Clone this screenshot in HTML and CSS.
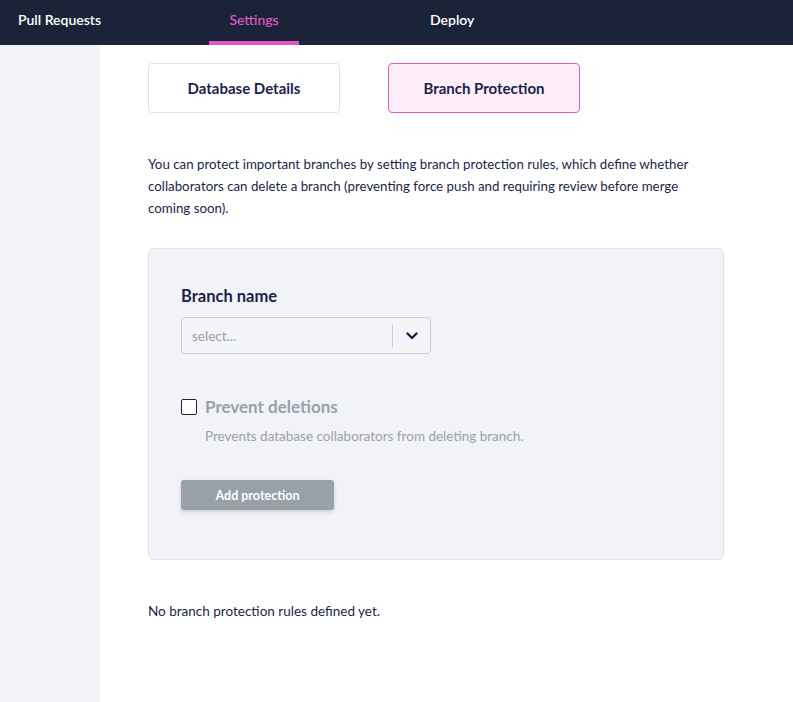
FILE: index.html
```html
<!DOCTYPE html>
<html>
<head>
<meta charset="utf-8">
<link rel="stylesheet" href="styles.css">
</head>
<body>
<nav class="topnav">
  <a class="nav-item nav-pr">Pull Requests</a>
  <a class="nav-item nav-settings active">Settings</a>
  <a class="nav-item nav-deploy">Deploy</a>
</nav>
<div class="layout">
  <aside class="sidebar"></aside>
  <main class="content">
    <div class="tabs">
      <button class="tab">Database Details</button>
      <button class="tab tab-active">Branch Protection</button>
    </div>
    <p class="intro">You can protect important branches by setting branch protection rules, which define whether collaborators can delete a branch (preventing force push and requiring review before merge coming soon).</p>
    <section class="card">
      <h3 class="label">Branch name</h3>
      <div class="select">
        <span class="placeholder">select...</span>
        <span class="sep"></span>
        <span class="chev">
          <svg width="14" height="10" viewBox="0 0 14 10"><path d="M2.5 2.5 L7 7 L11.5 2.5" fill="none" stroke="#1b1f4b" stroke-width="2.4" stroke-linecap="round" stroke-linejoin="round"/></svg>
        </span>
      </div>
      <div class="check-row">
        <span class="checkbox"></span>
        <span class="check-label">Prevent deletions</span>
      </div>
      <p class="check-desc">Prevents database collaborators from deleting branch.</p>
      <button class="add-btn">Add protection</button>
    </section>
    <p class="empty">No branch protection rules defined yet.</p>
  </main>
</div>
</body>
</html>
```
FILE: styles.css
```css
* { box-sizing: border-box; }
html, body { margin: 0; padding: 0; }
body {
  font-family: Lato, "Noto Sans", sans-serif;
  color: #1b1f4b;
  background: #fff;
  width: 793px;
  height: 702px;
  overflow: hidden;
}
.topnav {
  height: 45px;
  background: #1b2338;
  display: flex;
  align-items: stretch;
}
.nav-item {
  color: #fff;
  font-size: 14px;
  font-weight: 600;
  display: flex;
  align-items: center;
  padding-bottom: 2px;
  border-bottom: 4px solid transparent;
  justify-content: center;
}
.nav-pr { margin-left: 18px; }
.nav-settings { margin-left: 108px; width: 90px; color: #e05cc8; font-weight: 500; }
.nav-settings.active { border-bottom-color: #e453c6; }
.nav-deploy { margin-left: 131px; }
.layout { display: flex; height: 657px; }
.sidebar { width: 100px; background: #f1f3f8; flex: none; }
.content { padding: 18px 0 0 48px; width: 624px; }
.tabs { display: flex; gap: 48px; }
.tab {
  width: 192px;
  height: 50px;
  border: 1px solid #dfe1e6;
  border-radius: 4px;
  background: #fff;
  font-family: inherit;
  font-size: 15px;
  font-weight: 700;
  color: #1b1f4b;
  padding: 0;
}
.tab-active { background: #fdeefa; border-color: #dc5cc3; }
.intro {
  margin: 40px 0 0;
  font-size: 13.3px;
  line-height: 22px;
  color: #1b1f4b;
  width: 560px;
}
.card {
  margin-top: 29px;
  width: 576px;
  height: 312px;
  background: #f1f3f8;
  border: 1px solid #e2e4ea;
  border-radius: 5px;
  padding: 36px 32px;
}
.label { margin: 0; font-size: 16.5px; font-weight: 700; line-height: 22px; }
.select {
  margin-top: 10px;
  width: 250px;
  height: 37px;
  border: 1px solid #c9ccd2;
  border-radius: 4px;
  background: #f3f5f8;
  display: flex;
  align-items: center;
}
.placeholder { flex: 1; padding-left: 10px; font-size: 13.5px; color: #9a9ea6; }
.sep { width: 1px; height: 22px; background: #c9ccd2; }
.chev { width: 37px; display: flex; justify-content: center; align-items: center; }
.check-row { margin-top: 42px; display: flex; align-items: center; gap: 8px; }
.checkbox {
  width: 16px; height: 16px;
  border: 1.5px solid #1b1f4b;
  border-radius: 2px;
  background: #fff;
}
.check-label { font-size: 17px; font-weight: 700; color: #9ba0a8; line-height: 22px; }
.check-desc { margin: 8px 0 0 24px; font-size: 13.5px; color: #9ba0a8; line-height: 20px; }
.add-btn {
  margin-top: 34px;
  width: 153px;
  height: 30px;
  border: none;
  border-radius: 3px;
  background: #98a1a7;
  color: #fff;
  font-family: inherit;
  font-size: 12.5px;
  font-weight: 700;
  box-shadow: 0 2px 4px rgba(0,0,0,0.15);
}
.empty { margin: 41px 0 0; font-size: 13.5px; line-height: 20px; }
```
